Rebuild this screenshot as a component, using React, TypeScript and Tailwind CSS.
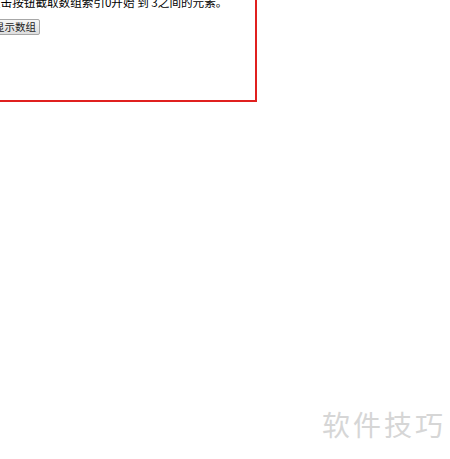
export default function App() {
  return (
    <div
      className="relative h-[459px] w-[450px] overflow-hidden bg-white text-black"
      style={{ fontFamily: '"Microsoft YaHei", "Noto Sans CJK SC", sans-serif' }}
    >
      {/* red bordered demo box, top-left cut off by the screenshot */}
      <div className="-ml-[40px] -mt-[20px] h-[122px] w-[297px] border-2 border-[#e0201f] bg-white pl-[27px] pt-[12px]">
        <p className="whitespace-nowrap text-[11.6px] leading-[16px]">
          点击按钮截取数组索引0开始 到 3之间的元素。
        </p>
        <button className="ml-[1px] mt-[9px] rounded-[2px] border border-[#a7a7a7] bg-gradient-to-b from-[#f6f6f6] to-[#dedede] px-[3px] text-[10.5px] leading-[14px] text-[#222]">
          显示数组
        </button>
      </div>

      {/* watermark */}
      <div className="absolute right-[4px] top-[406px] text-[28px] leading-[36px] tracking-[3px] text-[#d6d6d6]">
        软件技巧
      </div>
    </div>
  );
}
